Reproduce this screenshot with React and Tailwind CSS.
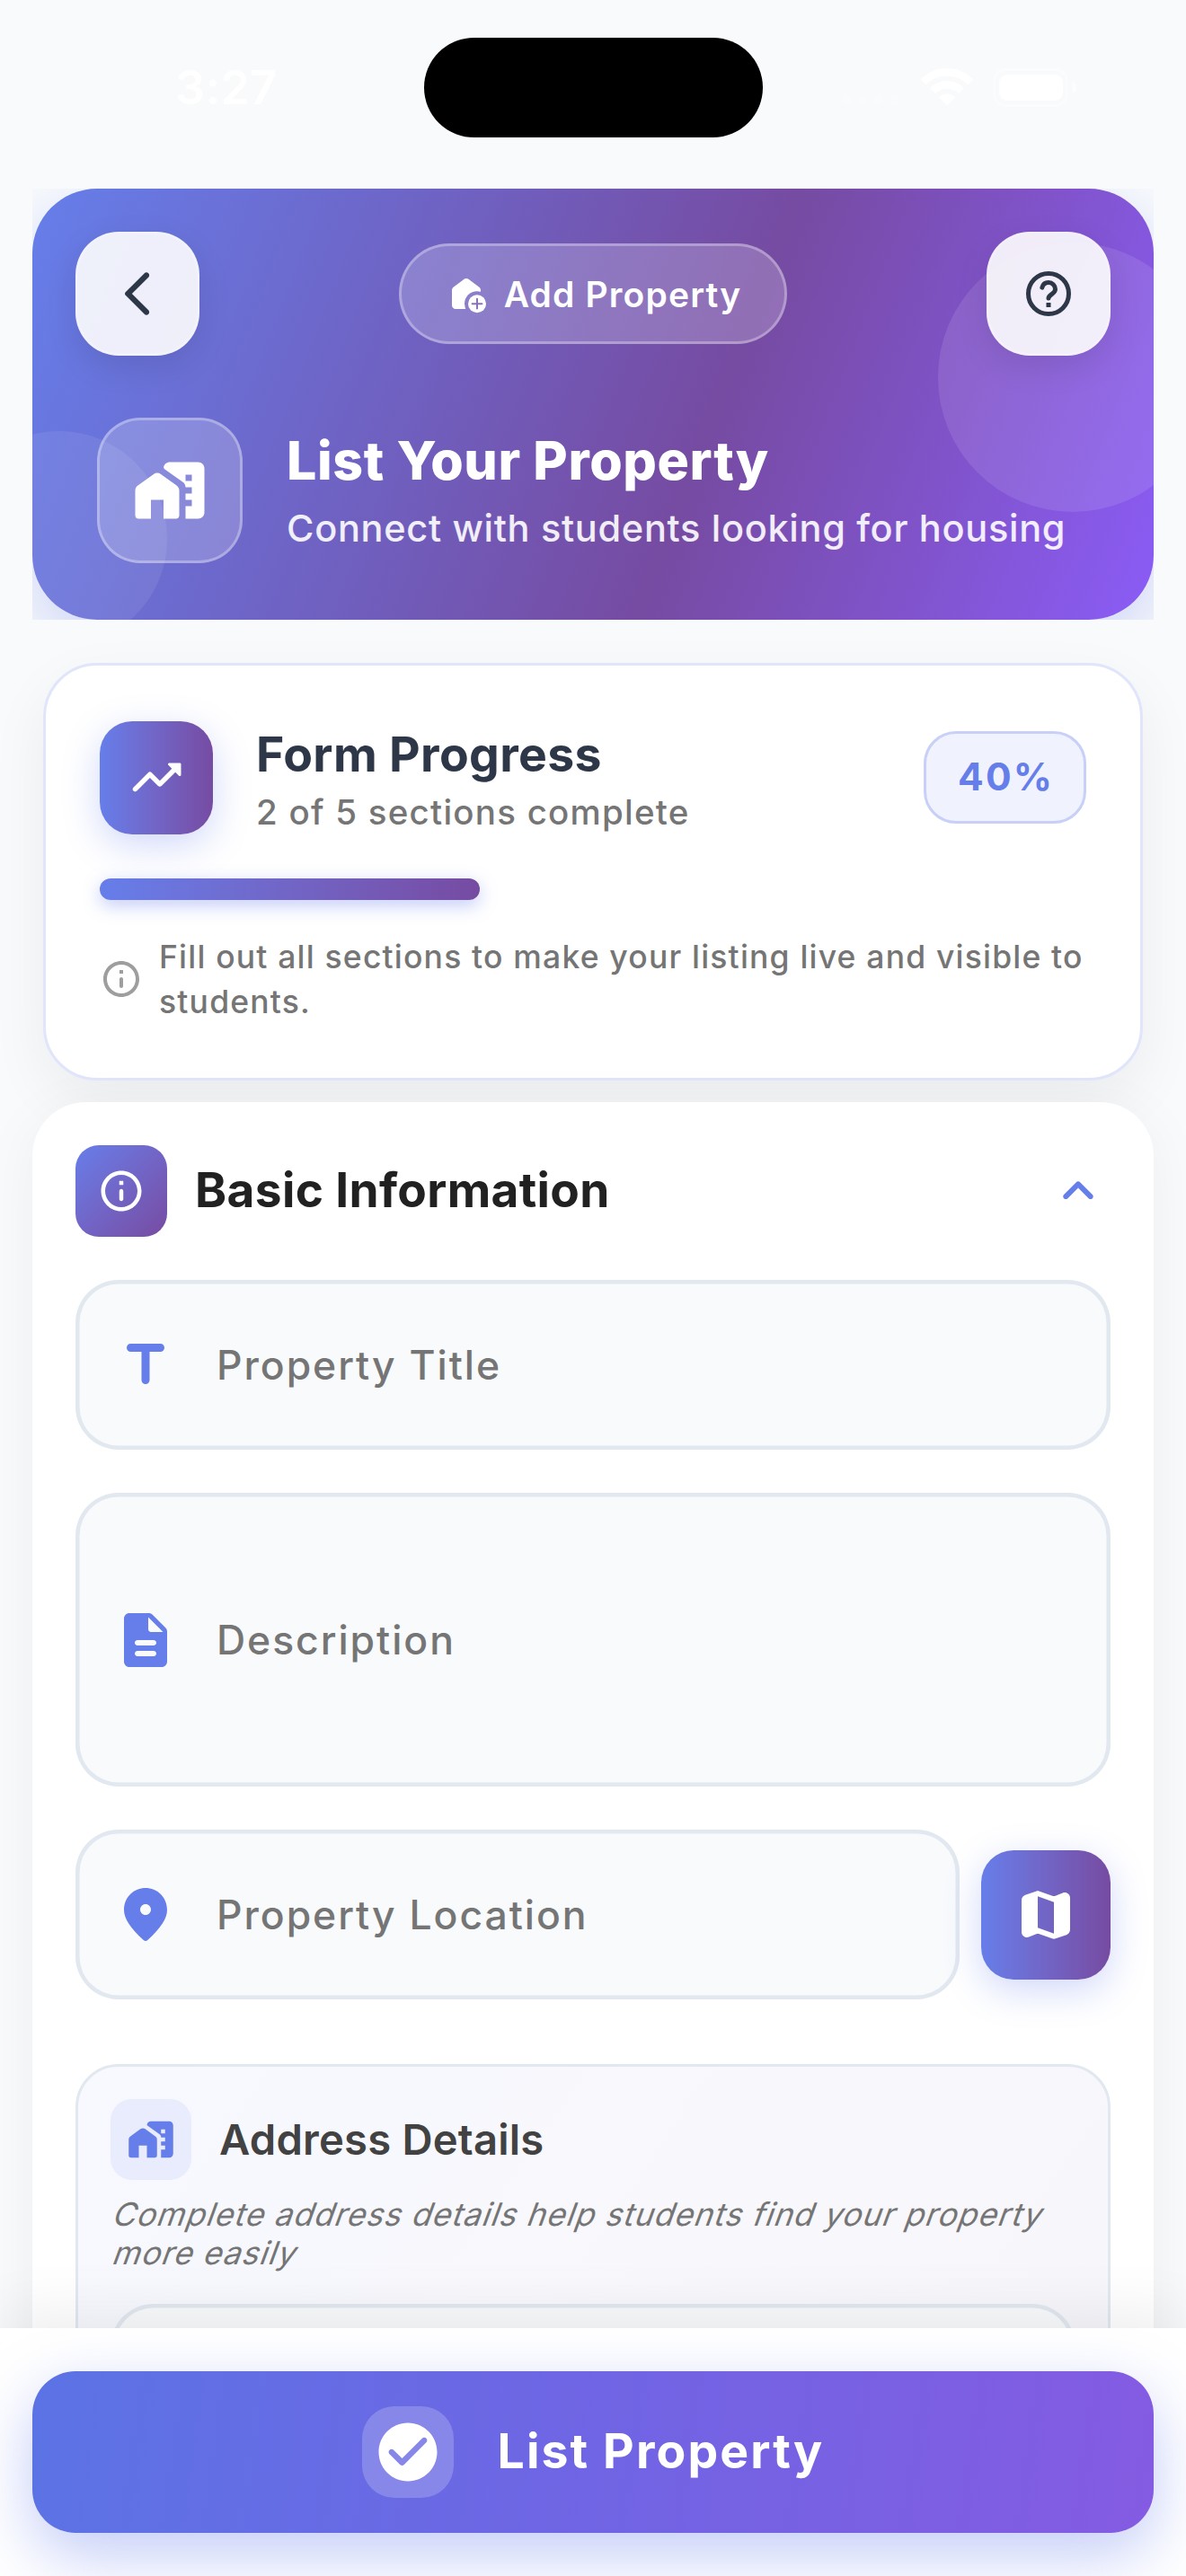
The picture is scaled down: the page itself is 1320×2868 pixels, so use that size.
const PATHS = {
  back: "M16.88 2.88c-.49-.49-1.28-.49-1.77 0L6.7 11.29c-.39.39-.39 1.02 0 1.41l8.41 8.41c.49.49 1.28.49 1.77 0s.49-1.28 0-1.77L9.54 12l7.35-7.35c.48-.49.48-1.28-.01-1.77z",
  homeWork:
    "M1 12.03c0-.65.31-1.26.84-1.63l5-3.57c.7-.5 1.63-.5 2.32 0l5 3.57c.53.38.84.98.84 1.63V20c0 .55-.45 1-1 1h-4v-6H6v6H2c-.55 0-1-.45-1-1zM12 3h9c1.1 0 2 .9 2 2v14c0 1.1-.9 2-2 2h-4v-4h2v-2h-2v-2h2v-2h-2c0-.65-.31-1.26-.84-1.63L10.4 5.25C10.1 5 10 4.8 10.05 4.55 10.25 3.65 11 3 12 3zM17 7v2h2V7z",
  trending:
    "M16.85 6.85l1.44 1.44-4.88 4.88-3.29-3.29c-.39-.39-1.02-.39-1.41 0l-6 6.01c-.39.39-.39 1.02 0 1.41.39.39 1.02.39 1.41 0L9.41 12l3.29 3.29c.39.39 1.02.39 1.41 0l5.59-5.58 1.44 1.44c.31.31.85.09.85-.35V6.5c.01-.28-.21-.5-.49-.5h-4.29c-.45 0-.67.54-.36.85z",
  up: "M8.12 14.71L12 10.83l3.88 3.88c.39.39 1.02.39 1.41 0 .39-.39.39-1.02 0-1.41L12.7 8.71c-.39-.39-1.02-.39-1.41 0L6.7 13.3c-.39.39-.39 1.02 0 1.41.39.38 1.03.39 1.42 0z",
  title:
    "M5 5.5C5 6.33 5.67 7 6.5 7h4v10.5c0 .83.67 1.5 1.5 1.5s1.5-.67 1.5-1.5V7h4c.83 0 1.5-.67 1.5-1.5S18.33 4 17.5 4h-11C5.67 4 5 4.67 5 5.5z",
  description:
    "M14.59 2.59c-.38-.38-.89-.59-1.42-.59H6c-1.1 0-2 .9-2 2v16c0 1.1.89 2 1.99 2H18c1.1 0 2-.9 2-2V8.83c0-.53-.21-1.04-.59-1.41l-4.82-4.83zM15 18H9c-.55 0-1-.45-1-1s.45-1 1-1h6c.55 0 1 .45 1 1s-.45 1-1 1zm0-4H9c-.55 0-1-.45-1-1s.45-1 1-1h6c.55 0 1 .45 1 1s-.45 1-1 1zm-2-6V3.5L18.5 9H14c-.55 0-1-.45-1-1z",
  pin: "M12 2C7.8 2 4 5.22 4 10.2c0 3.18 2.45 6.92 7.34 11.22.38.33.95.33 1.33 0C17.55 17.12 20 13.38 20 10.2 20 5.22 16.2 2 12 2zm0 10c-1.1 0-2-.9-2-2s.9-2 2-2 2 .9 2 2-.9 2-2 2z",
  map: "M14.65 4.98l-5-1.75c-.42-.15-.88-.15-1.3-.01L4.36 4.56C3.55 4.84 3 5.6 3 6.46v11.85c0 1.41 1.41 2.37 2.72 1.86l2.93-1.14c.22-.09.47-.09.69-.01l5 1.75c.42.15.88.15 1.3.01l3.99-1.34c.81-.27 1.36-1.04 1.36-1.9V5.69c0-1.41-1.41-2.37-2.72-1.86l-2.93 1.14c-.22.08-.46.09-.69.01zM15 18.89l-6-2.11V5.11l6 2.11v11.67z",
  check:
    "M12 2C6.48 2 2 6.48 2 12s4.48 10 10 10 10-4.48 10-10S17.52 2 12 2zM9.29 16.29L5.7 12.7c-.39-.39-.39-1.02 0-1.41.39-.39 1.02-.39 1.41 0L10 14.17l6.88-6.88c.39-.39 1.02-.39 1.41 0 .39.39.39 1.02 0 1.41l-7.59 7.59c-.38.39-1.02.39-1.41 0z",
  info: "M12 2C6.48 2 2 6.48 2 12s4.48 10 10 10 10-4.48 10-10S17.52 2 12 2zm0 18c-4.41 0-8-3.59-8-8s3.59-8 8-8 8 3.59 8 8-3.59 8-8 8zM11 7h2v2h-2zM12 11c.55 0 1 .45 1 1v4c0 .55-.45 1-1 1s-1-.45-1-1v-4c0-.55.45-1 1-1z",
};

function Icon({ name, className }) {
  return (
    <svg viewBox="0 0 24 24" fill="currentColor" fillRule="evenodd" className={`shrink-0 ${className}`}>
      <path d={PATHS[name]} />
    </svg>
  );
}

function HelpIcon() {
  return (
    <svg viewBox="0 0 24 24" fill="none" stroke="currentColor" strokeWidth="2" className="size-[60px]">
      <circle cx="12" cy="12" r="9" />
      <path d="M9.15 9.25C9.5 7.9 10.6 7 12 7c1.66 0 3 1.34 3 3 0 2.1-2.85 2.3-3 4" strokeLinecap="round" />
      <path d="M11 17h2" />
    </svg>
  );
}

function AddHomeIcon() {
  return (
    <svg viewBox="0 0 24 24" className="size-12 shrink-0">
      <mask id="badge-cut">
        <rect width="24" height="24" fill="white" />
        <circle cx="18" cy="17.6" r="7" fill="black" />
      </mask>
      <path
        mask="url(#badge-cut)"
        fill="white"
        d="M4 10c0-.63.3-1.22.8-1.6l6-4.5c.71-.53 1.69-.53 2.4 0l6 4.5c.5.38.8.97.8 1.6v10.5H6c-1.1 0-2-.9-2-2z"
      />
      <circle cx="18" cy="17.6" r="5" fill="white" />
      <path d="M18 14.9v5.4M15.3 17.6h5.4" stroke="#8a70bd" strokeWidth="1" strokeLinecap="round" />
    </svg>
  );
}

function StatusBar() {
  return (
    <div className="flex h-[194px] shrink-0 items-center">
      <div className="w-[472px] pt-[2px] pl-[195px] text-[52px] leading-none font-semibold tracking-[0.4px] text-white">
        3:27
      </div>
      <div className="h-[111px] w-[377px] rounded-full bg-black" />
      <div className="flex flex-1 items-center pl-[88px]">
        <div className="flex gap-2 pt-[28px]">
          {[0, 1, 2, 3].map((i) => (
            <div key={i} className="size-[10px] rounded-[3px] bg-white/20" />
          ))}
        </div>
        <svg viewBox="0 0 58 42" className="ml-[24px] h-[42px] w-[58px]">
          <path
            fill="white"
            d="M29 0C40.500 0 50.500 4.500 57.500 11.800c.5.500.5 1 0 1.500l-4.400 4.400c-.5.500-1 .5-1.500 0C45.500 12 37.700 8.800 29 8.800S12.500 12 6.400 17.700c-.5.500-1 .5-1.500 0L.5 13.300c-.5-.5-.5-1 0-1.500C7.500 4.500 17.500 0 29 0zM29 14.300c7.200 0 13.600 2.700 18.400 7.200.5.500.5 1 0 1.500l-4.600 4.500c-.5.500-1 .5-1.500 0C38 24.600 33.800 22.800 29 22.800s-9 1.800-12.300 4.700c-.5.500-1 .5-1.500 0L10.600 23c-.5-.5-.5-1 0-1.500C15.400 17 21.800 14.300 29 14.300zM29 28.400c3.400 0 6.300 1.200 8.500 3.300.5.500.5 1 0 1.500l-7.600 7.800c-.5.500-1.300.5-1.800 0l-7.600-7.800c-.5-.5-.5-1 0-1.500 2.200-2.100 5.100-3.300 8.500-3.300z"
          />
        </svg>
        <div className="ml-[22px] flex items-center gap-1">
          <div className="flex h-[43px] w-[84px] items-center justify-center rounded-[14px] border-[3px] border-white/40">
            <div className="h-[29px] w-[71px] shrink-0 rounded-[9px] bg-white" />
          </div>
          <div className="h-[14px] w-[5px] rounded-r-full bg-white/50" />
        </div>
      </div>
    </div>
  );
}

function HeaderButton({ children }) {
  return (
    <button className="flex size-[138px] items-center justify-center rounded-[48px] border-[3px] border-white/20 bg-[#fdfdfd]/90 bg-clip-border text-[#2d3748] shadow-[0_12px_36px_rgba(0,0,0,0.1)]">
      {children}
    </button>
  );
}

function Header() {
  return (
    <div className="mx-9 h-[480px] shrink-0 overflow-hidden">
      <div className="h-full rounded-[72px] shadow-[0_24px_70px_rgba(102,126,234,0.3)]">
        <div className="relative h-full overflow-hidden rounded-[72px] bg-[linear-gradient(111deg,#667eea_0%,#764ba2_60%,#8b5cf6_100%)] px-12 pt-12">
          <div className="absolute top-[60px] -right-[60px] size-[300px] rounded-full bg-white/10" />
          <div className="absolute top-[270px] -left-[90px] size-[240px] rounded-full bg-white/8" />
          <div className="relative flex items-center justify-between">
            <HeaderButton>
              <Icon name="back" className="size-[60px]" />
            </HeaderButton>
            <div className="flex h-[112px] w-[432px] items-center justify-center gap-[18px] rounded-full border-[3px] border-white/30 bg-white/20 text-[39px] leading-none font-[560] tracking-[1.15px] text-white">
              <AddHomeIcon />
              <span>Add Property</span>
            </div>
            <HeaderButton>
              <HelpIcon />
            </HeaderButton>
          </div>
          <div className="relative mt-[69px] flex items-center gap-[49px] pl-6">
            <div className="flex size-[162px] shrink-0 items-center justify-center rounded-[48px] border-[3px] border-white/30 bg-white/20 text-white">
              <Icon name="homeWork" className="size-[84px]" />
            </div>
            <div className="pb-[3px] whitespace-nowrap">
              <h1 className="text-[59px] leading-[71px] font-extrabold tracking-[0.62px] text-white">
                List Your Property
              </h1>
              <p className="mt-[15px] text-[41.5px] leading-[50px] font-[450] tracking-[0.69px] text-white/90">
                Connect with students looking for housing
              </p>
            </div>
          </div>
        </div>
      </div>
    </div>
  );
}

function ProgressCard() {
  return (
    <div className="mx-12 mt-12 h-[465px] shrink-0 rounded-[60px] border-[3px] border-[#e0e5fb] bg-white p-[60px] shadow-[0_24px_66px_rgba(0,0,0,0.06)]">
      <div className="flex h-[129px] items-center">
        <div className="flex size-[126px] shrink-0 items-center justify-center rounded-[36px] bg-linear-to-r from-[#667eea] to-[#764ba2] text-white shadow-[0_12px_40px_rgba(102,126,234,0.3)]">
          <Icon name="trending" className="size-[66px]" />
        </div>
        <div className="ml-12 flex-1 pt-[4px]">
          <h2 className="text-[53.5px] leading-[65px] font-bold tracking-[0.35px] text-[#2d3748]">Form Progress</h2>
          <p className="mt-[7px] text-[38.5px] leading-[50px] font-[460] tracking-[1.23px] text-[#757575]">
            2 of 5 sections complete
          </p>
        </div>
        <div className="flex h-[103px] w-[181px] items-center justify-center rounded-[36px] border-[3px] border-[#c8d0f8] bg-[#f0f2fd] pl-[2px] text-[42.5px] leading-none font-bold tracking-[2.1px] text-[#667eea]">
          40%
        </div>
      </div>
      <div className="mt-12 h-6 w-[423px] rounded-full bg-linear-to-r from-[#667eea] to-[#764ba2] shadow-[0_6px_20px_rgba(102,126,234,0.4)]" />
      <div className="mt-[37px] flex items-center gap-[18px]">
        <Icon name="info" className="size-12 text-[#9e9e9e]" />
        <p className="pt-[2px] text-[35.5px] leading-[50.4px] font-[450] tracking-[1.19px] whitespace-nowrap text-[#757575]">
          Fill out all sections to make your listing live and visible to
          <br />
          students.
        </p>
      </div>
    </div>
  );
}

function Field({ icon, label, className }) {
  return (
    <div
      className={`flex items-center gap-[43px] rounded-[48px] bg-[#f8fafc] pl-[42px] text-[44.5px] leading-none font-[450] tracking-[1.95px] text-[#757575] shadow-[inset_0_0_0_4.5px_#e2e8f0] ${className}`}
    >
      <Icon name={icon} className="size-[72px] text-[#667eea]" />
      <span className="pt-px">{label}</span>
    </div>
  );
}

function AddressDetails() {
  return (
    <div className="mt-[72px] h-[1200px] rounded-[48px] border-[3px] border-[#e2e8f0] bg-[linear-gradient(125deg,#f7f9fe_0%,#f8f7fc_50%,#f6f4fa_100%)] p-9">
      <div className="flex items-center gap-[31px]">
        <div className="flex size-[90px] items-center justify-center rounded-[24px] bg-[#e8ecfc] text-[#667eea]">
          <Icon name="homeWork" className="size-[54px]" />
        </div>
        <h3 className="text-[47.2px] leading-none font-[580] tracking-[0.2px] text-[#424242]">Address Details</h3>
      </div>
      <div className="mt-[18px] text-[35.5px] leading-[42.6px] whitespace-nowrap text-[#757575]">
        <p className="origin-[0_34px] -skew-x-[20deg] tracking-[1.02px]">
          Complete address details help students find your property
        </p>
        <p className="origin-[0_34px] -skew-x-[20deg] tracking-[1.02px]">more easily</p>
      </div>
      <div className="mt-[35px] h-[189px] rounded-[48px] bg-[#f8fafc] shadow-[inset_0_0_0_4.5px_#e2e8f0]" />
    </div>
  );
}

function BasicInformation() {
  return (
    <div className="relative mx-9 mt-6 shrink-0 rounded-[60px] bg-white p-12 shadow-[0_12px_66px_rgba(0,0,0,0.05)]">
      <div className="flex items-center">
        <div className="flex size-[102px] items-center justify-center rounded-[26px] bg-linear-135 from-[#667eea] to-[#764ba2] text-white">
          <Icon name="info" className="size-[54px]" />
        </div>
        <h2 className="ml-[31px] flex-1 pb-[3px] text-[53.2px] leading-none font-[670] tracking-[0.34px] text-[#212121]">
          Basic Information
        </h2>
        <Icon name="up" className="size-[72px] text-[#667eea]" />
      </div>
      <div className="mt-12 flex flex-col gap-12">
        <Field icon="title" label="Property Title" className="h-[189px]" />
        <Field icon="description" label="Description" className="h-[327px]" />
        <div className="flex items-center gap-6">
          <Field icon="pin" label="Property Location" className="h-[189px] flex-1" />
          <button className="flex size-36 items-center justify-center rounded-[36px] bg-linear-to-r from-[#667eea] to-[#764ba2] text-white shadow-[0_12px_40px_rgba(102,126,234,0.3)]">
            <Icon name="map" className="size-[72px]" />
          </button>
        </div>
      </div>
      <AddressDetails />
    </div>
  );
}

function BottomBar() {
  return (
    <div className="absolute inset-x-0 bottom-0 h-[276px] bg-white shadow-[0_-12px_66px_rgba(0,0,0,0.08)]">
      <div className="h-full overflow-hidden px-9 pt-12">
        <button className="flex h-[180px] w-full items-center justify-center gap-[49px] rounded-[48px] bg-[linear-gradient(98deg,#5b73e5_0%,#7065e4_50%,#845be2_100%)] text-[53.5px] leading-none font-[680] tracking-[2.12px] text-white shadow-[0_24px_70px_rgba(102,126,234,0.4)]">
          <span className="flex size-[102px] items-center justify-center rounded-[36px] bg-white/20">
            <Icon name="check" className="size-[78px]" />
          </span>
          <span className="pb-[3px]">List Property</span>
        </button>
      </div>
    </div>
  );
}

export default function App() {
  return (
    <div className="relative flex h-[2868px] w-[1320px] flex-col overflow-hidden bg-[#f8fafc] font-['Inter',sans-serif]">
      <StatusBar />
      <div className="h-4 shrink-0" />
      <Header />
      <ProgressCard />
      <BasicInformation />
      <BottomBar />
    </div>
  );
}
